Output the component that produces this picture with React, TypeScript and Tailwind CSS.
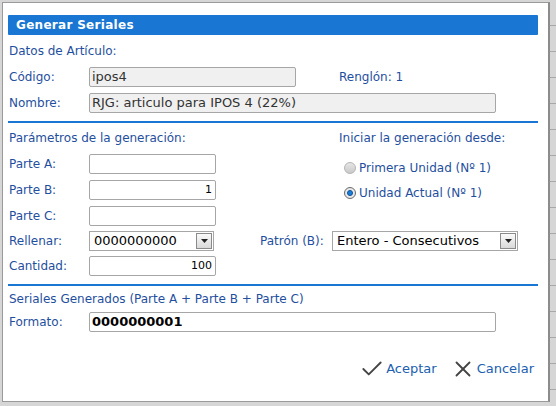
import React from "react";
import { Check, X } from "lucide-react";

const font = { fontFamily: '"DejaVu Sans", Verdana, sans-serif' };

function Label({ children }: { children: React.ReactNode }) {
  return <div className="w-[80px] shrink-0 text-[12px] text-[#1f4f9e]">{children}</div>;
}

function TextBox({
  value = "",
  w,
  grey = false,
  right = false,
}: {
  value?: string;
  w: string;
  grey?: boolean;
  right?: boolean;
}) {
  return (
    <div
      className={`${w} h-[20px] border border-[#a6a6a6] rounded-[2px] flex items-center px-[2px] ${
        grey ? "bg-[#f0f0f0] text-[13px] text-[#333]" : "bg-white text-[11px] text-black pr-[3px]"
      } ${right ? "justify-end" : ""}`}
    >
      {value}
    </div>
  );
}

function Select({ value, w }: { value: string; w: string }) {
  return (
    <div className={`${w} h-[20px] border border-[#a6a6a6] bg-white flex items-center justify-between pl-[4px] pr-[1px]`}>
      <span className="text-[13px] text-black">{value}</span>
      <div className="w-[16px] h-[16px] border border-[#8a8a8a] bg-gradient-to-b from-[#fafafa] to-[#d9d9d9] flex items-center justify-center">
        <svg width="7" height="4" viewBox="0 0 7 4">
          <path d="M0 0h7L3.5 4z" fill="#222" />
        </svg>
      </div>
    </div>
  );
}

function Radio({ checked, label }: { checked?: boolean; label: string }) {
  return (
    <div className="h-[14px] flex items-center gap-[3px]">
      <div
        className={`w-[12px] h-[12px] rounded-full border flex items-center justify-center ${
          checked ? "border-[#6a6a6a] bg-[#e8e8e8]" : "border-[#b5b5b5] bg-gradient-to-b from-[#e6e6e6] to-[#c9c9c9]"
        }`}
      >
        {checked && <div className="w-[6px] h-[6px] rounded-full bg-[#1a7fd6] border border-[#0b4f9a]" />}
      </div>
      <span className="text-[12px] text-[#1f4f9e]">{label}</span>
    </div>
  );
}

const stripRows = Array.from({ length: 16 }, (_, i) => i);

export default function App() {
  return (
    <div className="w-[556px] h-[406px] bg-[#d6d6d6] pl-[2px] pt-[2px] flex" style={font}>
      <div className="w-[548px] h-[400px] bg-white border border-[#9a9a9a] border-r-2 border-r-[#8c8c8c] pl-[5px] pr-[10px] pt-[12px] flex flex-col shrink-0">
        <div className="h-[20px] bg-[#1976d2] rounded-[1px] flex items-center pl-[8px]">
          <span className="text-[12px] font-bold text-white tracking-[0.3px]">Generar Seriales</span>
        </div>

        <div className="pl-[1px] mt-[8px] h-[16px] flex items-center text-[12px] text-[#1f4f9e]">
          Datos de Artículo:
        </div>

        <div className="pl-[1px] mt-[8px] flex items-center">
          <Label>Código:</Label>
          <TextBox value="ipos4" w="w-[207px]" grey />
          <div className="ml-[43px] text-[12px] text-[#1f4f9e]">Renglón: 1</div>
        </div>

        <div className="pl-[1px] mt-[6px] flex items-center">
          <Label>Nombre:</Label>
          <TextBox value="RJG: articulo para IPOS 4 (22%)" w="w-[407px]" grey />
        </div>

        <div className="mt-[8px] h-[2px] bg-[#1976d2]" />

        <div className="pl-[1px] mt-[7px] h-[16px] flex items-center text-[12px] text-[#1f4f9e]">
          <div className="w-[330px]">Parámetros de la generación:</div>
          <div>Iniciar la generación desde:</div>
        </div>

        <div className="pl-[1px] mt-[8px] flex">
          <div className="flex flex-col gap-[6px]">
            <div className="flex items-center">
              <Label>Parte A:</Label>
              <TextBox w="w-[127px]" />
            </div>
            <div className="flex items-center">
              <Label>Parte B:</Label>
              <TextBox value="1" w="w-[127px]" right />
            </div>
            <div className="flex items-center">
              <Label>Parte C:</Label>
              <TextBox w="w-[127px]" />
            </div>
          </div>
          <div className="ml-[128px] pt-[7px] flex flex-col gap-[11px]">
            <Radio label="Primera Unidad (Nº 1)" />
            <Radio checked label="Unidad Actual (Nº 1)" />
          </div>
        </div>

        <div className="pl-[1px] mt-[5px] flex items-center">
          <Label>Rellenar:</Label>
          <Select value="0000000000" w="w-[125px]" />
          <div className="ml-[46px] w-[72px] text-[12px] text-[#1f4f9e]">Patrón (B):</div>
          <Select value="Entero - Consecutivos" w="w-[186px]" />
        </div>

        <div className="pl-[1px] mt-[5px] flex items-center">
          <Label>Cantidad:</Label>
          <TextBox value="100" w="w-[127px]" right />
        </div>

        <div className="mt-[8px] h-[2px] bg-[#1976d2]" />

        <div className="pl-[1px] mt-[5px] h-[16px] flex items-center text-[12px] text-[#1f4f9e]">
          Seriales Generados (Parte A + Parte B + Parte C)
        </div>

        <div className="pl-[1px] mt-[5px] flex items-center">
          <Label>Formato:</Label>
          <div className="w-[407px] h-[20px] border border-[#a6a6a6] rounded-[2px] bg-white flex items-center px-[2px] text-[13px] font-bold text-black">
            0000000001
          </div>
        </div>

        <div className="mt-[24px] flex justify-end items-center pr-[4px]">
          <div className="flex items-center">
            <Check size={26} strokeWidth={1.7} className="text-[#444]" />
            <span className="ml-[1px] text-[13px] text-[#2060b0]">Aceptar</span>
          </div>
          <div className="ml-[13px] flex items-center">
            <X size={26} strokeWidth={1.7} className="text-[#444]" />
            <span className="ml-[1px] text-[13px] text-[#2060b0]">Cancelar</span>
          </div>
        </div>
      </div>
      <div className="flex-1 flex flex-col -mt-[2px]">
        {stripRows.map((i) => (
          <div key={i} className="h-[26px] border-b border-[#a8a8a8] shrink-0" />
        ))}
      </div>
    </div>
  );
}
